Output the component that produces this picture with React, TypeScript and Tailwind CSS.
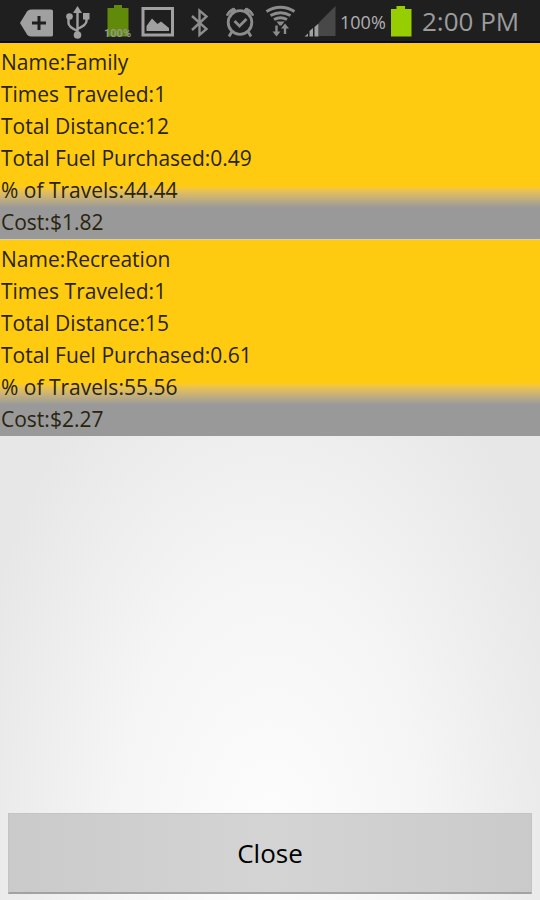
interface Travel {
  name: string;
  times: number;
  distance: number;
  fuel: string;
  percent: string;
  cost: string;
}

const TRAVELS: Travel[] = [
  { name: 'Family', times: 1, distance: 12, fuel: '0.49', percent: '44.44', cost: '$1.82' },
  { name: 'Recreation', times: 1, distance: 15, fuel: '0.61', percent: '55.56', cost: '$2.27' },
];

const ICON = 'h-10 shrink-0';

function StatusBar() {
  return (
    <header className="flex h-[43px] items-start overflow-hidden border-b-2 border-[#080a14] bg-[#1f1f1f] pl-4 text-[#8c8c8c]">
      {/* Keyboard tag */}
      <svg className={`${ICON} w-11`} viewBox="0 0 44 40" fill="#a0a0a0">
        <path d="M4 23 11 11.500Q12.500 9.500 15 9.500H35Q37 9.500 37 11V35Q37 36.500 35 36.500H15Q12.500 36.500 11 34.500Z" />
        <path d="M23 16v14M16 23h14" stroke="#1f1f1f" strokeWidth="3" />
      </svg>

      {/* USB */}
      <svg className={`${ICON} w-9`} viewBox="0 0 36 40" fill="none" stroke="#a0a0a0" strokeWidth="2.400">
        <path d="M17.500 11v24M17.500 31q-9-4-9-8v-6M17.500 29q9-4 9-8v-5" />
        <g fill="#a0a0a0" stroke="none">
          <path d="m17.500 6 4.500 7h-9z" />
          <circle cx="17.500" cy="35" r="3.800" />
          <circle cx="9.500" cy="16.500" r="3.300" />
          <path d="M23 13h6.500v6.500H23z" />
        </g>
      </svg>

      {/* Charge level */}
      <svg className={`${ICON} w-10`} viewBox="0 0 40 40">
        <path d="M18 5h8v3h6.500v28.500h-21V8H18z" fill="#618a0b" />
        <text x="21.500" y="37" textAnchor="middle" fontSize="11" fontWeight="bold" className="font-['Roboto',sans-serif]" fill="#929c83">100%</text>
      </svg>

      {/* Picture */}
      <svg className={`${ICON} w-12`} viewBox="0 0 48 40" fill="none">
        <path d="M7 8.500h29.500v26.500H7z" stroke="#a0a0a0" strokeWidth="3" />
        <path d="M10.500 31v-5l5.500-7.500 5.500 5.500 3.500-2.500 8 6.500v3z" fill="#a0a0a0" />
      </svg>

      {/* Bluetooth */}
      <svg className={`${ICON} w-9`} viewBox="0 0 36 40" fill="none" stroke="currentColor" strokeWidth="2.400">
        <path d="m8 16 14.500 13-7 6V10.500l7 6L8 30" />
      </svg>

      {/* Alarm */}
      <svg className={`${ICON} w-10`} viewBox="0 0 40 40" fill="none" stroke="currentColor" strokeWidth="2.800">
        <circle cx="20" cy="22.500" r="11.800" />
        <path d="m14.500 21 5 5 7-7M12 31.500l-3 5M28 31.500l3 5" />
        <path d="m6.500 15q1.500-5 7.500-7l1.500 2q-5 2-8 6zM33.500 15q-1.500-5-7.500-7l-1.500 2q5 2 8 6z" fill="currentColor" stroke="currentColor" strokeWidth="1" />
      </svg>

      {/* Wifi with traffic arrows */}
      <svg className={`${ICON} w-10`} viewBox="0 0 40 40" fill="none" stroke="currentColor" strokeWidth="3">
        <path d="M6.500 11.500q14-8.500 28 0M10.500 15.500q10-5.500 20 0M14 19.500q6.500-3.500 13 0" />
        <path d="M16.500 21.500h8l-3 4h-2z" fill="currentColor" stroke="none" />
        <path d="M16.500 25.500v7M25 34v-8" strokeWidth="2.400" />
        <path d="m12.500 31.500 4 5 4-5zM21 28.500l4-5 4 5z" fill="currentColor" stroke="none" />
      </svg>

      {/* Signal */}
      <svg className={`${ICON} w-10`} viewBox="0 0 40 40">
        <path d="M35.500 6v30H19V22.500z" fill="#484848" />
        <path d="M4.500 36.500l3.500-3v3zM9.500 36.500V31l3.500-3v8.500zM14.500 36.500V27l4-3.500v13z" fill="#a0a0a0" />
      </svg>

      <span className="w-[50px] shrink-0 pt-1 font-['Open_Sans',sans-serif] text-lg leading-9 text-[#b0b0b0]">100%</span>

      {/* Phone battery */}
      <svg className={`${ICON} w-8`} viewBox="0 0 32 40">
        <path d="M6.500 6H15v3h6.500v27.500H1V9h5.500z" fill="#97ce02" />
      </svg>

      <time className="whitespace-nowrap font-['Open_Sans',sans-serif] text-[26px] leading-[42px] text-[#9c9c9c]">2:00 PM</time>
    </header>
  );
}

function TravelItem({ travel }: { readonly travel: Travel }) {
  return (
    <li className="border-b border-[#ddd3a8] bg-linear-to-b from-[#ffcb10] from-73% to-[#999] to-84% pt-[3px] pb-px pl-px last:border-b-0">
      <p>Name:{travel.name}</p>
      <p>Times Traveled:{travel.times}</p>
      <p>Total Distance:{travel.distance}</p>
      <p>Total Fuel Purchased:{travel.fuel}</p>
      <p>% of Travels:{travel.percent}</p>
      <p>Cost:{travel.cost}</p>
    </li>
  );
}

export default function App() {
  return (
    <div className="flex min-h-screen flex-col bg-[#e7e7e7] font-['Open_Sans',sans-serif]">
      <StatusBar />
      <main className="flex grow flex-col bg-[radial-gradient(58%_66%_at_50%_95%,#fdfdfd_0%,#f5f5f5_50%,#e7e7e7_100%)]">
        <ul className="text-[21px] leading-8 text-[#29240f]">
          {TRAVELS.map((travel) => (
            <TravelItem key={travel.name} travel={travel} />
          ))}
        </ul>
        <div className="mt-auto p-2 pb-1.5">
          <button
            type="button"
            className="h-[81px] w-full border border-b-2 border-[#c4c4c4] border-b-[#a2a2a2] bg-linear-to-r from-[#cacaca] via-[#d4d4d4] to-[#cacaca] text-[26px] text-black"
          >
            Close
          </button>
        </div>
      </main>
    </div>
  );
}
